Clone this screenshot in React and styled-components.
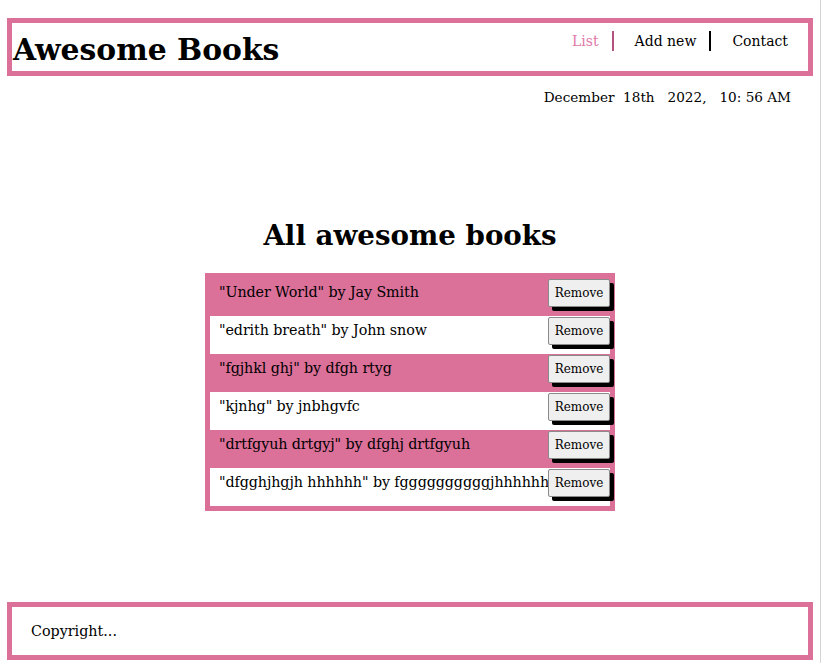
import React from "react";
import styled, { createGlobalStyle } from "styled-components";

const PINK = "#db7099";

const Global = createGlobalStyle`
  html, body { margin: 0; padding: 0; background: #fff; }
  body { font-family: "DejaVu Serif", Georgia, serif; color: #000; }
`;

const Page = styled.div`
  width: 821px;
  min-height: 663px;
  box-sizing: border-box;
  border-right: 1px solid #d4d4d8;
  padding: 18px 7px 0 7px;
  display: flex;
  flex-direction: column;
`;

const Header = styled.header`
  height: 58px;
  box-sizing: border-box;
  border: 5px solid ${PINK};
  display: flex;
  justify-content: space-between;
  align-items: flex-start;
  padding: 0 0 0 1px;
`;

const Title = styled.h1`
  margin: 7px 0 0;
  font-size: 29.8px;
  font-weight: bold;
  line-height: 40px;
`;

const Nav = styled.ul`
  list-style: none;
  margin: 8px 20px 0 0;
  padding: 0;
  display: flex;
  font-size: 14px;
`;

const NavItem = styled.li`
  padding: 0 ${(p) => (p.$last ? "0" : "13px")} 0 ${(p) => (p.$first ? "0" : "21px")};
  line-height: 20px;
  color: ${(p) => (p.$active ? "#e07aa8" : "#000")};
  border-right: ${(p) => (p.$sep ? `2px solid ${p.$sep}` : "none")};
`;

const DateLine = styled.div`
  align-self: flex-end;
  margin: 12px 22px 0 0;
  font-size: 13.6px;
  white-space: pre;
  line-height: 18px;
`;

const Main = styled.main`
  flex: 1;
  display: flex;
  flex-direction: column;
  align-items: center;
  padding-top: 112px;
`;

const Heading = styled.h2`
  margin: 0;
  font-size: 27.7px;
  font-weight: bold;
  line-height: 36px;
`;

const BookList = styled.ul`
  list-style: none;
  margin: 19px 0 0 0;
  padding: 0;
  width: 410px;
  box-sizing: border-box;
  border: 5px solid ${PINK};
`;

const Row = styled.li`
  height: 38px;
  box-sizing: border-box;
  background: ${(p) => (p.$alt ? "#fff" : PINK)};
  display: flex;
  justify-content: space-between;
  align-items: flex-start;
  padding: 1px 0 0 9px;
`;

const BookText = styled.span`
  font-size: 14.3px;
  letter-spacing: -0.1px;
  line-height: 24px;
  margin-top: 1px;
  white-space: nowrap;
  overflow: hidden;
  flex: 1;
  min-width: 0;
`;

const RemoveButton = styled.button`
  font-family: "DejaVu Serif", Georgia, serif;
  font-size: 12px;
  background: #efefef;
  color: #000;
  border: 1px solid #8a8a8a;
  border-radius: 2px;
  padding: 0 4px;
  height: 28px;
  width: 62px;
  box-shadow: 4px 4px 0 #000;
  flex-shrink: 0;
`;

const Footer = styled.footer`
  margin-top: auto;
  margin-bottom: 3px;
  height: 58px;
  box-sizing: border-box;
  border: 5px solid ${PINK};
  display: flex;
  align-items: center;
  padding-left: 19px;
  font-size: 14.3px;
`;

const books = [
  ['"Under World"', "Jay Smith"],
  ['"edrith breath"', "John snow"],
  ['"fgjhkl ghj"', "dfgh rtyg"],
  ['"kjnhg"', "jnbhgvfc"],
  ['"drtfgyuh drtgyj"', "dfghj drtfgyuh"],
  ['"dfgghjhgjh hhhhhh"', "fggggggggggjhhhhhhh"],
];

export default function App() {
  return (
    <>
      <Global />
      <Page>
        <Header>
          <Title>Awesome Books</Title>
          <Nav>
            <NavItem $first $active $sep="#b3527f">List</NavItem>
            <NavItem $sep="#000">Add new</NavItem>
            <NavItem $last>Contact</NavItem>
          </Nav>
        </Header>
        <DateLine>{"December  18th   2022,   10: 56 AM"}</DateLine>
        <Main>
          <Heading>All awesome books</Heading>
          <BookList>
            {books.map(([t, a], i) => (
              <Row key={i} $alt={i % 2 === 1}>
                <BookText>{`${t} by ${a}`}</BookText>
                <RemoveButton>Remove</RemoveButton>
              </Row>
            ))}
          </BookList>
        </Main>
        <Footer>Copyright...</Footer>
      </Page>
    </>
  );
}
